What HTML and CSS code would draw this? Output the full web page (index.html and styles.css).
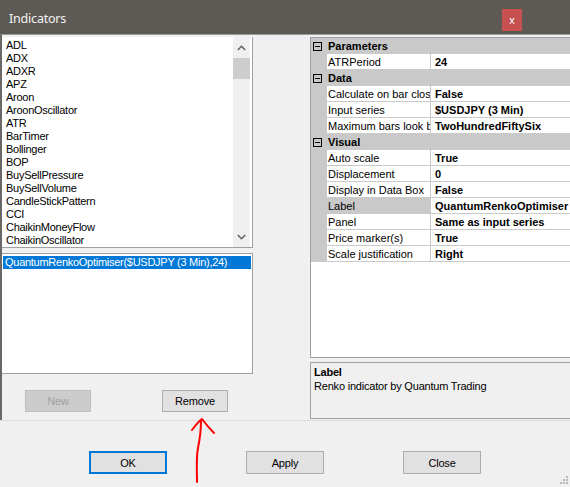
FILE: index.html
```html
<!DOCTYPE html>
<html>
<head>
<meta charset="utf-8">
<link rel="stylesheet" href="styles.css">
</head>
<body>
<div class="window">
  <div class="titlebar">
    <span class="title">Indicators</span>
    <span class="close">x</span>
  </div>
  <div class="main">
    <div class="left">
      <div class="list avail">
        <div class="items">
          <div class="item">ADL</div>
          <div class="item">ADX</div>
          <div class="item">ADXR</div>
          <div class="item">APZ</div>
          <div class="item">Aroon</div>
          <div class="item">AroonOscillator</div>
          <div class="item">ATR</div>
          <div class="item">BarTimer</div>
          <div class="item">Bollinger</div>
          <div class="item">BOP</div>
          <div class="item">BuySellPressure</div>
          <div class="item">BuySellVolume</div>
          <div class="item">CandleStickPattern</div>
          <div class="item">CCI</div>
          <div class="item">ChaikinMoneyFlow</div>
          <div class="item">ChaikinOscillator</div>
        </div>
        <div class="vscroll">
          <div class="sbtn"><svg width="9" height="6" viewBox="0 0 9 6"><path d="M0.8 5 L4.5 1.3 L8.2 5" fill="none" stroke="#606060" stroke-width="1.5"/></svg></div>
          <div class="thumb"></div>
          <div class="track"></div>
          <div class="sbtn"><svg width="9" height="6" viewBox="0 0 9 6"><path d="M0.8 1 L4.5 4.7 L8.2 1" fill="none" stroke="#606060" stroke-width="1.5"/></svg></div>
        </div>
      </div>
      <div class="list chosen">
        <div class="item sel">QuantumRenkoOptimiser($USDJPY (3 Min),24)</div>
      </div>
      <div class="lbtns">
        <button class="btn small disabled">New</button>
        <button class="btn small">Remove</button>
      </div>
    </div>
    <div class="right">
      <div class="pgrid">
        <div class="row cat"><div class="m"><svg width="9" height="9" viewBox="0 0 9 9"><rect x="0.5" y="0.5" width="8" height="8" fill="none" stroke="#000"/><path d="M2 4.5 H7" stroke="#000"/></svg></div><div class="c">Parameters</div></div>
        <div class="row prop"><div class="m"></div><div class="n">ATRPeriod</div><div class="v">24</div></div>
        <div class="row cat"><div class="m"><svg width="9" height="9" viewBox="0 0 9 9"><rect x="0.5" y="0.5" width="8" height="8" fill="none" stroke="#000"/><path d="M2 4.5 H7" stroke="#000"/></svg></div><div class="c">Data</div></div>
        <div class="row prop"><div class="m"></div><div class="n">Calculate on bar close</div><div class="v">False</div></div>
        <div class="row prop"><div class="m"></div><div class="n">Input series</div><div class="v">$USDJPY (3 Min)</div></div>
        <div class="row prop"><div class="m"></div><div class="n">Maximum bars look back</div><div class="v">TwoHundredFiftySix</div></div>
        <div class="row cat"><div class="m"><svg width="9" height="9" viewBox="0 0 9 9"><rect x="0.5" y="0.5" width="8" height="8" fill="none" stroke="#000"/><path d="M2 4.5 H7" stroke="#000"/></svg></div><div class="c">Visual</div></div>
        <div class="row prop"><div class="m"></div><div class="n">Auto scale</div><div class="v">True</div></div>
        <div class="row prop"><div class="m"></div><div class="n">Displacement</div><div class="v">0</div></div>
        <div class="row prop"><div class="m"></div><div class="n">Display in Data Box</div><div class="v">False</div></div>
        <div class="row prop"><div class="m"></div><div class="n selected">Label</div><div class="v">QuantumRenkoOptimiser</div></div>
        <div class="row prop"><div class="m"></div><div class="n">Panel</div><div class="v">Same as input series</div></div>
        <div class="row prop"><div class="m"></div><div class="n">Price marker(s)</div><div class="v">True</div></div>
        <div class="row prop"><div class="m"></div><div class="n">Scale justification</div><div class="v">Right</div></div>
      </div>
      <div class="help">
        <div class="help-title">Label</div>
        <div class="help-text">Renko indicator by Quantum Trading</div>
      </div>
    </div>
  </div>
  <div class="footer">
    <button class="btn big primary">OK</button>
    <button class="btn big">Apply</button>
    <button class="btn big">Close</button>
  </div>
  <svg class="grip" width="10" height="10" viewBox="0 0 10 10">
    <rect x="7" y="1" width="2" height="2" fill="#b8b8b8"/>
    <rect x="4" y="4" width="2" height="2" fill="#b8b8b8"/>
    <rect x="7" y="4" width="2" height="2" fill="#b8b8b8"/>
    <rect x="1" y="7" width="2" height="2" fill="#b8b8b8"/>
    <rect x="4" y="7" width="2" height="2" fill="#b8b8b8"/>
    <rect x="7" y="7" width="2" height="2" fill="#b8b8b8"/>
  </svg>
  <svg class="arrow" width="570" height="487" viewBox="0 0 570 487">
    <path d="M197 482 C197 470 196 458 198 448 C200 438 201 428 201 421" fill="none" stroke="#ff0000" stroke-width="2" stroke-linecap="round"/>
    <path d="M192 430 C195 426 198 422 202 419 C205 423 209 428 214 433" fill="none" stroke="#ff0000" stroke-width="2" stroke-linecap="round" stroke-linejoin="round"/>
  </svg>
</div>
</body>
</html>
```

FILE: styles.css
```css
* { box-sizing: border-box; }
html, body { margin: 0; padding: 0; }
body {
  width: 570px;
  height: 487px;
  overflow: hidden;
  background: #f0f0f0;
  font-family: "Liberation Sans", Arial, sans-serif;
  font-size: 11px;
  color: #000;
}
.window {
  position: relative;
  width: 570px;
  height: 487px;
  overflow: hidden;
}
.titlebar {
  height: 34px;
  background: #5d5955;
  display: flex;
  align-items: center;
  padding-left: 9px;
}
.title {
  color: #f4f4f4;
  font-family: "Noto Sans", sans-serif;
  font-size: 12.5px;
  letter-spacing: -0.2px;
  margin-top: 2px;
}
.close {
  margin-left: auto;
  margin-right: 48px;
  align-self: flex-start;
  margin-top: 9px;
  width: 20px;
  height: 22px;
  background: #c75050;
  color: #fff;
  font-size: 11px;
  display: flex;
  align-items: center;
  justify-content: center;
  padding-bottom: 1px;
}
.main {
  height: 386px;
  border-top: 1px solid #9c9a98;
  border-left: 2px solid #6a6866;
  padding-top: 2px;
  display: flex;
}
.left {
  width: 251px;
  flex: none;
  display: flex;
  flex-direction: column;
}
.list {
  background: #fff;
  border: 1px solid #a0a0a0;
  border-left: none;
  letter-spacing: -0.27px;
}
.avail {
  height: 211px;
  border-top: none;
  display: flex;
}
.items {
  width: 231px;
  padding-top: 2px;
  padding-left: 4px;
}
.item {
  height: 13px;
  line-height: 13px;
  white-space: nowrap;
}
.vscroll {
  width: 17px;
  margin-right: 2px;
  background: #f0f0f0;
  display: flex;
  flex-direction: column;
}
.sbtn {
  height: 21px;
  display: flex;
  align-items: center;
  justify-content: center;
}
.thumb {
  height: 21px;
  background: #cdcdcd;
}
.track { flex: 1; }
.chosen {
  height: 121px;
  margin-top: 5px;
  padding: 2px 1px 0 1px;
}
.item.sel {
  background: #0078d7;
  color: #fff;
  padding-left: 2px;
  height: 13px;
}
.lbtns {
  display: flex;
  gap: 71px;
  padding-left: 23px;
  margin-top: 16px;
}
.btn {
  font-family: "Liberation Sans", Arial, sans-serif;
  font-size: 11px;
  background: #e1e1e1;
  border: 1px solid #adadad;
  color: #000;
  padding: 0;
  margin: 0;
  letter-spacing: -0.2px;
}
.btn.small { width: 66px; height: 22px; }
.btn.big { width: 78px; height: 23px; }
.btn.disabled {
  background: #cccccc;
  border-color: #bfbfbf;
  color: #a0a0a0;
}
.btn.primary { border: 2px solid #0078d7; }
.right {
  margin-left: 57px;
  width: 262px;
  flex: none;
  display: flex;
  flex-direction: column;
}
.pgrid {
  height: 321px;
  background: #fff;
  border: 1px solid #a0a0a0;
}
.row {
  display: flex;
  height: 16px;
  white-space: nowrap;
}
.m {
  width: 16px;
  flex: none;
  background: #c9c9c9;
  display: flex;
  align-items: center;
  padding-left: 2px;
}
.cat .c {
  flex: 1;
  background: #c9c9c9;
  font-weight: bold;
  padding-left: 1px;
  line-height: 17px;
}
.prop .n {
  width: 104px;
  flex: none;
  overflow: hidden;
  border-right: 1px solid #c9c9c9;
  border-bottom: 1px solid #c9c9c9;
  padding-left: 1px;
  line-height: 17px;
}
.prop .n.selected { background: #c9c9c9; }
.prop .v {
  flex: 1;
  overflow: hidden;
  border-bottom: 1px solid #c9c9c9;
  font-weight: bold;
  padding-left: 4px;
  line-height: 17px;
}
.help {
  margin-top: 4px;
  height: 57px;
  border: 1px solid #a0a0a0;
  padding: 2px 3px 0 3px;
  line-height: 14px;
  letter-spacing: -0.2px;
}
.help-title { font-weight: bold; }
.footer {
  height: 67px;
  border-top: 1px solid #dcdcdc;
  padding-top: 30px;
  padding-left: 89px;
  display: flex;
  gap: 79px;
  align-items: flex-start;
}
.grip {
  position: absolute;
  right: 1px;
  bottom: 2px;
}
.arrow {
  position: absolute;
  left: 0;
  top: 0;
  pointer-events: none;
}
```
